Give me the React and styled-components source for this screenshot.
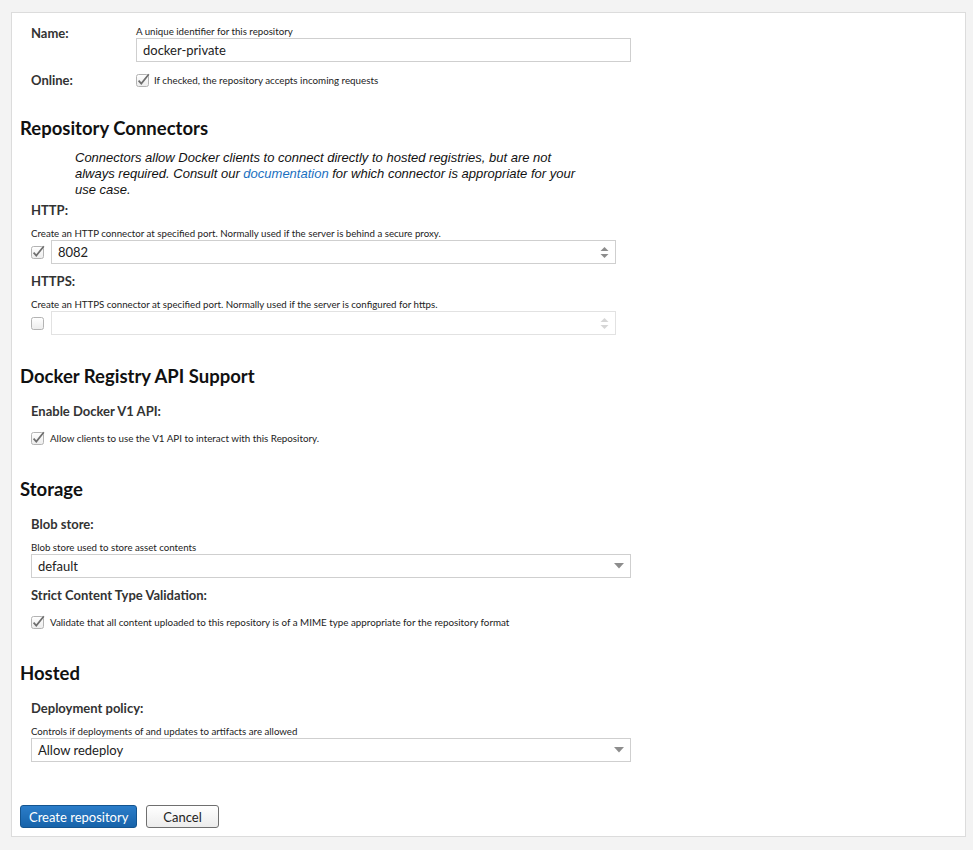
import React from 'react';
import styled, { createGlobalStyle } from 'styled-components';

const GlobalStyle = createGlobalStyle`
  html, body {
    margin: 0;
    padding: 0;
    background: #f3f3f3;
  }
  body {
    font-family: Lato, "Liberation Sans", Arial, sans-serif;
    color: #222;
  }
`;

const Panel = styled.div`
  box-sizing: border-box;
  margin: 12px 0 14px 11px;
  width: 955px;
  height: 825px;
  background: #fff;
  border: 1px solid #dcdcdc;
  padding: 12px 8px 0 8px;
`;

const NameGrid = styled.div`
  display: grid;
  grid-template-columns: 105px 495px;
  padding-left: 11px;
  row-gap: 10px;
`;

const RowLabel = styled.div`
  font-size: 13px;
  font-weight: bold;
  color: #333;
  line-height: 16px;
  padding-top: ${p => p.offset || 0}px;
`;

const Help = styled.div`
  font-size: 9.7px;
  line-height: 12px;
  color: #222;
  margin-bottom: 1px;
`;

const TextInput = styled.div`
  box-sizing: border-box;
  height: 24px;
  width: ${p => p.width}px;
  border: 1px solid ${p => (p.disabled ? '#e2e2e2' : '#cfcfcf')};
  display: flex;
  align-items: center;
  padding: 0 6px;
  font-size: 13px;
  color: #222;
  background: #fff;
`;

const Value = styled.span`
  flex: 1;
`;

const Section = styled.section`
  margin-top: ${p => p.gap}px;
`;

const SectionTitle = styled.h2`
  margin: 0 0 ${p => p.after}px 0;
  font-size: 18.5px;
  line-height: 20px;
  font-weight: bold;
  color: #111;
`;

const Intro = styled.p`
  margin: 0 0 4px 55px;
  width: 512px;
  font-family: "Liberation Sans", Arial, sans-serif;
  font-size: 13px;
  line-height: 16px;
  font-style: italic;
  color: #111;

  a {
    color: #1a6fc0;
    text-decoration: none;
  }
`;

const Field = styled.div`
  padding-left: 11px;
  margin-bottom: ${p => p.after || 0}px;
`;

const FieldLabel = styled.div`
  font-size: 13px;
  line-height: 16px;
  font-weight: bold;
  color: #333;
  margin-bottom: ${p => p.after}px;
`;

const CheckRow = styled.label`
  display: flex;
  align-items: center;
  gap: ${p => p.gap || 5}px;
  font-size: 9.8px;
  line-height: 14px;
  color: #222;
`;

const PortRow = styled.div`
  display: flex;
  align-items: center;
  gap: 6px;
`;

const ButtonBar = styled.div`
  display: flex;
  gap: 9px;
  margin-top: 43px;
`;

const Button = styled.button`
  box-sizing: border-box;
  height: 23px;
  padding: 0 ${p => (p.primary ? 8 : 16)}px;
  border-radius: 3px;
  font-family: inherit;
  font-size: 13px;
  border: 1px solid ${p => (p.primary ? '#14548f' : '#6f6f6f')};
  color: ${p => (p.primary ? '#fff' : '#222')};
  background: ${p =>
    p.primary
      ? 'linear-gradient(#2b7dc9, #1763aa)'
      : 'linear-gradient(#ffffff, #ececec)'};
`;

const Box = ({ checked }) => (
  <svg width="14" height="14" viewBox="0 0 14 14" style={{ flex: 'none' }}>
    <defs>
      <linearGradient id="cbg" x1="0" y1="0" x2="0" y2="1">
        <stop offset="0" stopColor="#ffffff" />
        <stop offset="1" stopColor="#ececec" />
      </linearGradient>
    </defs>
    <rect x="0.5" y="1.5" width="12" height="12" rx="2" fill="url(#cbg)" stroke="#b3b3b3" />
    {checked && (
      <path d="M2.6 7.6 L5.3 10.6 L12.8 1.2" fill="none" stroke="#6e6e6e" strokeWidth="1.7" />
    )}
  </svg>
);

const Spinner = ({ disabled }) => (
  <svg width="9" height="13" viewBox="0 0 9 13">
    <path d="M0.5 5 L4.5 1 L8.5 5 Z" fill={disabled ? '#d6d6d6' : '#8d8d8d'} />
    <path d="M0.5 8 L4.5 12 L8.5 8 Z" fill={disabled ? '#d6d6d6' : '#8d8d8d'} />
  </svg>
);

const Caret = () => (
  <svg width="10" height="6" viewBox="0 0 10 6">
    <path d="M0 0 L10 0 L5 5.5 Z" fill="#8d8d8d" />
  </svg>
);

const Select = ({ value }) => (
  <TextInput width={600}>
    <Value>{value}</Value>
    <Caret />
  </TextInput>
);

const PortField = ({ label, help, checked, value }) => (
  <Field after={9}>
    <FieldLabel after={9}>{label}</FieldLabel>
    <Help>{help}</Help>
    <PortRow>
      <Box checked={checked} />
      <TextInput width={565} disabled={!checked}>
        <Value>{value}</Value>
        <Spinner disabled={!checked} />
      </TextInput>
    </PortRow>
  </Field>
);

export default function App() {
  return (
    <>
      <GlobalStyle />
      <Panel>
        <NameGrid>
          <RowLabel offset={0}>Name:</RowLabel>
          <div>
            <Help>A unique identifier for this repository</Help>
            <TextInput width={495}>
              <Value>docker-private</Value>
            </TextInput>
          </div>
          <RowLabel offset={0}>Online:</RowLabel>
          <CheckRow gap={4}>
            <Box checked />
            If checked, the repository accepts incoming requests
          </CheckRow>
        </NameGrid>

        <Section gap={30}>
          <SectionTitle after={12}>Repository Connectors</SectionTitle>
          <Intro>
            Connectors allow Docker clients to connect directly to hosted registries, but are not
            always required. Consult our <a href="#docs">documentation</a> for which connector is
            appropriate for your use case.
          </Intro>
          <PortField
            label="HTTP:"
            help="Create an HTTP connector at specified port. Normally used if the server is behind a secure proxy."
            checked
            value="8082"
          />
          <PortField
            label="HTTPS:"
            help="Create an HTTPS connector at specified port. Normally used if the server is configured for https."
          />
        </Section>

        <Section gap={31}>
          <SectionTitle after={17}>Docker Registry API Support</SectionTitle>
          <Field>
            <FieldLabel after={12}>Enable Docker V1 API:</FieldLabel>
            <CheckRow>
              <Box checked />
              Allow clients to use the V1 API to interact with this Repository.
            </CheckRow>
          </Field>
        </Section>

        <Section gap={34}>
          <SectionTitle after={17}>Storage</SectionTitle>
          <Field after={9}>
            <FieldLabel after={9}>Blob store:</FieldLabel>
            <Help>Blob store used to store asset contents</Help>
            <Select value="default" />
          </Field>
          <Field>
            <FieldLabel after={12}>Strict Content Type Validation:</FieldLabel>
            <CheckRow>
              <Box checked />
              Validate that all content uploaded to this repository is of a MIME type appropriate for
              the repository format
            </CheckRow>
          </Field>
        </Section>

        <Section gap={34}>
          <SectionTitle after={17}>Hosted</SectionTitle>
          <Field>
            <FieldLabel after={9}>Deployment policy:</FieldLabel>
            <Help>Controls if deployments of and updates to artifacts are allowed</Help>
            <Select value="Allow redeploy" />
          </Field>
        </Section>

        <ButtonBar>
          <Button primary>Create repository</Button>
          <Button>Cancel</Button>
        </ButtonBar>
      </Panel>
    </>
  );
}
